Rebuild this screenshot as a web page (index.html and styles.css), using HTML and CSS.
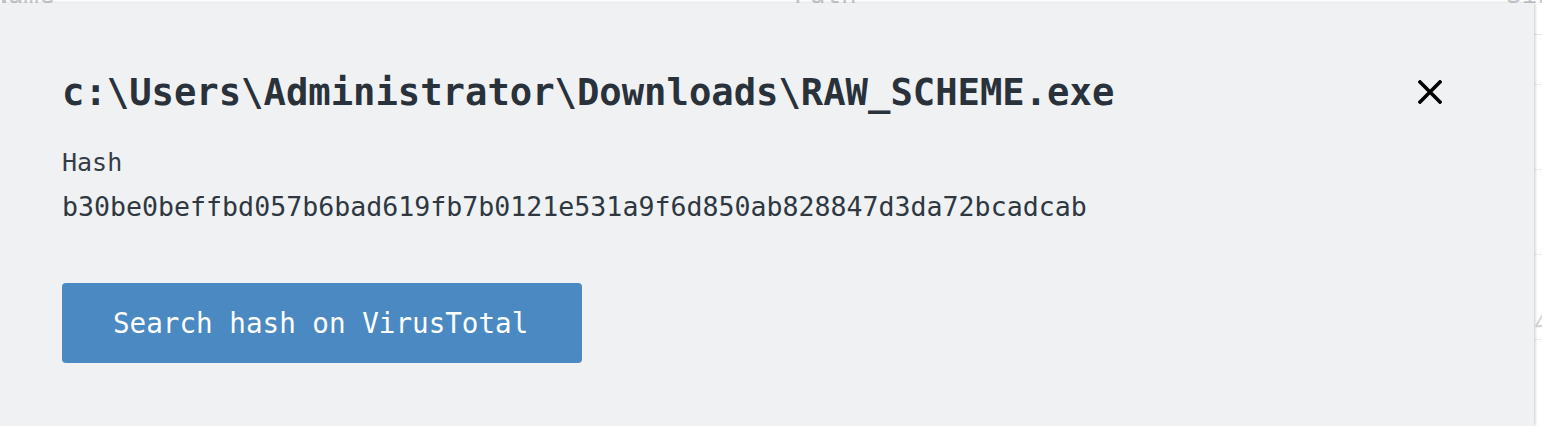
FILE: index.html
```html
<!DOCTYPE html>
<html lang="en">
<head>
<meta charset="utf-8">
<title>File details</title>
<link rel="stylesheet" href="styles.css">
</head>
<body>
  <div class="table">
    <div class="table-head">
      <span class="col col-name">Name</span>
      <span class="col col-path">Path</span>
      <span class="col col-size">Size</span>
    </div>
    <div class="table-row first"></div>
    <div class="table-row"></div>
    <div class="table-row"></div>
    <div class="table-row"><span class="cell-size">4</span></div>
  </div>

  <section class="panel">
    <header class="panel-head">
      <h1 class="panel-title">c:\Users\Administrator\Downloads\RAW_SCHEME.exe</h1>
      <button class="close" type="button" aria-label="Close">
        <svg width="24" height="24" viewBox="0 0 24 24" aria-hidden="true">
          <path d="M2 2 L22 22 M22 2 L2 22" stroke="#000" stroke-width="3.6" stroke-linecap="square" fill="none"/>
        </svg>
      </button>
    </header>
    <div class="field">
      <div class="field-label">Hash</div>
      <div class="field-value">b30be0beffbd057b6bad619fb7b0121e531a9f6d850ab828847d3da72bcadcab</div>
    </div>
    <button class="btn" type="button">Search hash on VirusTotal</button>
  </section>
</body>
</html>
```

FILE: styles.css
```css
html, body {
  margin: 0;
  padding: 0;
  background: #ffffff;
  overflow: hidden;
}

body {
  width: 1542px;
  height: 426px;
  position: relative;
  font-family: "DejaVu Sans Mono", "Liberation Mono", monospace;
}

.table {
  margin-top: -22px;
}

.table-head {
  display: grid;
  grid-template-columns: 802px 712px auto;
  margin-left: -8px;
  height: 57px;
  border-bottom: 1px solid #e4e6e9;
  box-sizing: border-box;
}

.col {
  font-size: 26px;
  line-height: 32px;
  color: #c7cace;
}

.table-row {
  height: 85px;
  border-bottom: 1px solid #eceef0;
  box-sizing: border-box;
  display: flex;
  justify-content: flex-end;
  align-items: flex-end;
}

.table-row.first {
  height: 50px;
}

.cell-size {
  font-size: 26px;
  line-height: 32px;
  color: #d4d6d9;
  margin-right: -8px;
}

.panel {
  position: absolute;
  left: 0;
  top: 3px;
  width: 1534px;
  height: 423px;
  background: #f0f1f3;
  box-shadow: 1px 0 3px rgba(0, 0, 0, 0.22);
  box-sizing: border-box;
  padding: 66px 92px 0 62px;
  color: #2a333c;
}

.panel-head {
  display: flex;
  align-items: center;
  justify-content: space-between;
}

.panel-title {
  margin: 0;
  font-size: 37.2px;
  line-height: 46px;
  font-weight: bold;
  color: #29323b;
  white-space: nowrap;
}

.close {
  border: 0;
  padding: 0;
  background: transparent;
  width: 24px;
  height: 24px;
  display: flex;
  cursor: pointer;
}

.field {
  margin-top: 33px;
}

.field-label {
  font-size: 25px;
  line-height: 30px;
  color: #343d46;
}

.field-value {
  margin-top: 13px;
  font-size: 26.6px;
  line-height: 32px;
  color: #2f3841;
  white-space: nowrap;
}

.btn {
  margin-top: 60px;
  display: flex;
  align-items: center;
  height: 80px;
  width: 520px;
  box-sizing: border-box;
  padding: 0 0 0 51px;
  border: 0;
  border-radius: 4px;
  background: #4a89c2;
  color: #ffffff;
  font-family: "DejaVu Sans Mono", "Liberation Mono", monospace;
  font-size: 27.6px;
  line-height: 33px;
  white-space: nowrap;
  cursor: pointer;
}
```
